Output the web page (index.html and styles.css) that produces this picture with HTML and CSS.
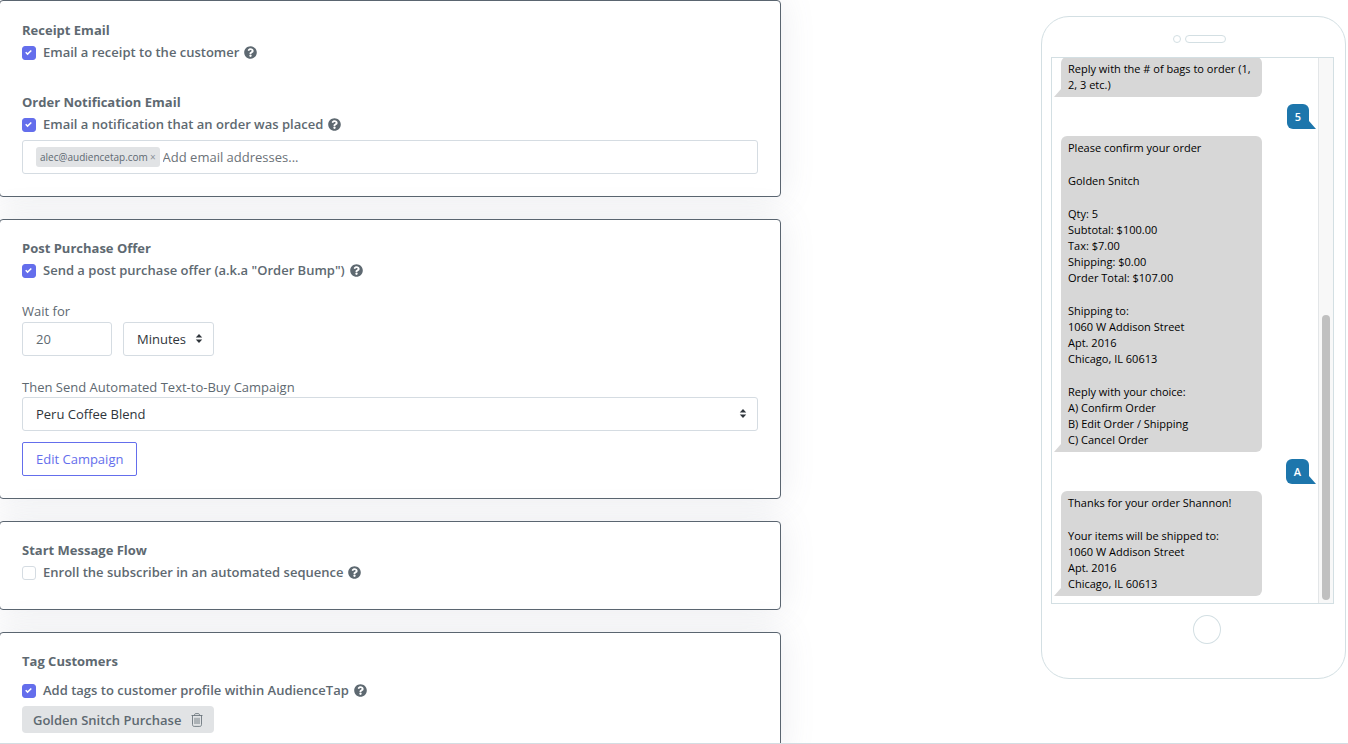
FILE: index.html
```html
<!DOCTYPE html>
<html lang="en">
<head>
<meta charset="utf-8">
<title>Campaign settings</title>
<link rel="stylesheet" href="styles.css">
</head>
<body>
<svg class="sprite" aria-hidden="true">
  <symbol id="help" viewBox="0 0 512 512"><path fill="currentColor" d="M504 256c0 137-111 248-248 248S8 393 8 256 119 8 256 8s248 111 248 248zM262.700 90c-54.500 0-89.300 23-116.500 63.800-3.500 5.300-2.400 12.400 2.700 16.300l34.700 26.300c5.200 3.900 12.600 3 16.700-2.100 17.900-22.700 30.100-35.800 57.300-35.800 20.400 0 45.700 13.100 45.700 33 0 15-12.400 22.700-32.500 34C247.100 238.500 216 254.900 216 296v4c0 6.600 5.400 12 12 12h56c6.600 0 12-5.400 12-12v-1.300c0-28.500 83.200-29.600 83.200-106.700 0-58-60.200-102-116.500-102zM256 338c-25.400 0-46 20.600-46 46s20.600 46 46 46 46-20.600 46-46-20.600-46-46-46z"/></symbol>
  <symbol id="tick" viewBox="0 0 8 8"><path fill="#fff" d="M6.600 1 2.900 4.700 1.400 3.200 0.200 4.400 2.900 7.100 7.800 2.200z"/></symbol>
  <symbol id="carets" viewBox="0 0 8 10"><path fill="currentColor" d="M4 0 7.600 4H.400zM4 10 .400 6h7.200z"/></symbol>
  <symbol id="trash" viewBox="0 0 12 14"><path fill="none" stroke="currentColor" stroke-width=".8" d="M.5 2.500h11M3.500 2.300C3.500 1 4 .6 5 .6h2c1 0 1.500.4 1.500 1.700M1.500 2.500v9c0 1.200.6 1.900 1.700 1.900h5.600c1.100 0 1.700-.7 1.700-1.900v-9M4 4.800v6.200M6 4.800v6.200M8 4.800v6.200"/></symbol>
</svg>
<div class="page">
  <main class="settings">
    <section class="card card-first">
      <h2 class="title">Receipt Email</h2>
      <div class="option">
        <span class="check"><input type="checkbox" id="receipt" checked><svg><use href="#tick"/></svg></span>
        <label for="receipt">Email a receipt to the customer</label>
        <svg class="help"><use href="#help"/></svg>
      </div>
      <h2 class="title title-next">Order Notification Email</h2>
      <div class="option">
        <span class="check"><input type="checkbox" id="notify" checked><svg><use href="#tick"/></svg></span>
        <label for="notify">Email a notification that an order was placed</label>
        <svg class="help"><use href="#help"/></svg>
      </div>
      <div class="emails">
        <span class="email">alec@audiencetap.com<button type="button" aria-label="Remove">×</button></span>
        <input type="text" placeholder="Add email addresses..." aria-label="Add email addresses">
      </div>
    </section>

    <section class="card">
      <h2 class="title">Post Purchase Offer</h2>
      <div class="option">
        <span class="check"><input type="checkbox" id="offer" checked><svg><use href="#tick"/></svg></span>
        <label for="offer">Send a post purchase offer (a.k.a "Order Bump")</label>
        <svg class="help"><use href="#help"/></svg>
      </div>
      <label class="label label-wait" for="wait">Wait for</label>
      <div class="wait">
        <input class="field number" id="wait" type="text" value="20">
        <span class="select"><select class="field" aria-label="Unit"><option>Minutes</option></select><svg><use href="#carets"/></svg></span>
      </div>
      <label class="label label-campaign" for="campaign">Then Send Automated Text-to-Buy Campaign</label>
      <span class="select select-wide"><select class="field" id="campaign"><option>Peru Coffee Blend</option></select><svg><use href="#carets"/></svg></span>
      <button class="edit" type="button">Edit Campaign</button>
    </section>

    <section class="card">
      <h2 class="title">Start Message Flow</h2>
      <div class="option option-last">
        <span class="check"><input type="checkbox" id="flow"><svg><use href="#tick"/></svg></span>
        <label for="flow">Enroll the subscriber in an automated sequence</label>
        <svg class="help"><use href="#help"/></svg>
      </div>
    </section>

    <section class="card">
      <h2 class="title">Tag Customers</h2>
      <div class="option option-tags">
        <span class="check"><input type="checkbox" id="tags" checked><svg><use href="#tick"/></svg></span>
        <label for="tags">Add tags to customer profile within AudienceTap</label>
        <svg class="help"><use href="#help"/></svg>
      </div>
      <span class="tag">Golden Snitch Purchase<button type="button" aria-label="Delete tag"><svg><use href="#trash"/></svg></button></span>
    </section>
  </main>

  <aside class="phone">
    <div class="speaker"><i class="camera"></i><i class="slot"></i></div>
    <div class="screen">
      <div class="chat">
        <div class="msg in"><p>Reply with the # of bags to order (1, 2, 3 etc.)</p></div>
        <div class="msg out"><p>5</p></div>
        <div class="msg in">
          <p>Please confirm your order</p>
          <p>Golden Snitch</p>
          <p>Qty: 5<br>Subtotal: $100.00<br>Tax: $7.00<br>Shipping: $0.00<br>Order Total: $107.00</p>
          <p>Shipping to:<br>1060 W Addison Street<br>Apt. 2016<br>Chicago, IL 60613</p>
          <p>Reply with your choice:<br>A) Confirm Order<br>B) Edit Order / Shipping<br>C) Cancel Order</p>
        </div>
        <div class="msg out"><p>A</p></div>
        <div class="msg in">
          <p>Thanks for your order Shannon!</p>
          <p>Your items will be shipped to:<br>1060 W Addison Street<br>Apt. 2016<br>Chicago, IL 60613</p>
        </div>
      </div>
      <div class="track"><div class="thumb"></div></div>
    </div>
    <div class="home"></div>
  </aside>
</div>
</body>
</html>
```
FILE: styles.css
```css
* { box-sizing: border-box; }
body {
  margin: 0;
  background: #fff;
  color: #5e6971;
  font: 13px/22px "Open Sans", "Noto Sans", sans-serif;
}
input, select, button { font: inherit; color: inherit; margin: 0; }
.sprite { position: absolute; width: 0; height: 0; }
.page {
  display: flex;
  justify-content: space-between;
  align-items: flex-start;
  height: 100vh;
  overflow: hidden;
  border-bottom: 1px solid #d3dde2;
}
.settings {
  width: 58%;
  margin-left: -1px;
  display: flex;
  flex-direction: column;
  gap: 22px;
}
.card {
  padding: 17px 22px 22px;
  background: #fff;
  border: 1px solid #5a6570;
  border-radius: 4px;
  box-shadow: 0 0 35px rgba(110, 120, 145, 0.14);
}
.card-first { padding-top: 18px; }
.title { margin: 0; font-size: 13px; line-height: 22px; font-weight: 700; }
.title-next { margin-top: 28px; }
.option { display: flex; align-items: center; height: 22px; font-weight: 600; }
.option-last { margin-bottom: 4px; }
.option-tags { margin: 7px 0 5px; }
.check { position: relative; width: 14px; height: 14px; margin: 2px 7px 0 0; }
.check input {
  appearance: none;
  display: block;
  width: 14px;
  height: 14px;
  border: 1px solid #d5dce2;
  border-radius: 3px;
  background: #fff;
}
.check input:checked { background: #646eec; border-color: #646eec; }
.check svg { position: absolute; left: 3px; top: 3px; width: 7px; height: 7px; display: none; pointer-events: none; }
.check input:checked + svg { display: block; }
.help { width: 13px; height: 13px; margin-left: 5px; }

.emails {
  display: flex;
  align-items: center;
  gap: 3px;
  height: 34px;
  margin-top: 5px;
  padding: 0 13px;
  border: 1px solid #d5dce2;
  border-radius: 3px;
}
.email {
  display: flex;
  align-items: center;
  height: 20px;
  padding: 0 4px;
  border-radius: 3px;
  background: #e1e3e5;
  font-size: 10px;
}
.email button { padding: 0 0 0 2px; border: 0; background: none; line-height: 18px; color: #8b9298; }
.emails input { flex: 1; min-width: 0; padding: 0; border: 0; outline: 0; background: none; }
.emails input::placeholder { color: #6c7278; opacity: 1; }

.label { display: block; line-height: 22px; }
.label-wait { margin-top: 19px; }
.label-campaign { margin-top: 21px; line-height: 20px; }
.wait { display: flex; gap: 11px; }
.field {
  height: 34px;
  padding: 0 13px;
  border: 1px solid #d5dce2;
  border-radius: 3px;
  background: #fff;
}
.number { width: 90px; }
.select { position: relative; display: block; width: 91px; color: #2f353b; }
.select select { appearance: none; display: block; width: 100%; }
.select svg { position: absolute; right: 11px; top: 12px; width: 8px; height: 9px; pointer-events: none; }
.select-wide { width: 100%; }
.edit {
  display: block;
  height: 34px;
  margin-top: 11px;
  padding: 0 13px;
  border: 1px solid #646eec;
  border-radius: 2px;
  background: #fff;
  color: #646eec;
}
.tag {
  display: flex;
  align-items: center;
  gap: 10px;
  width: fit-content;
  height: 27px;
  padding: 0 11px;
  border-radius: 4px;
  background: #e1e3e5;
  font-weight: 600;
}
.tag button { display: flex; padding: 0; border: 0; background: none; }
.tag svg { width: 12px; height: 14px; }

.phone {
  flex: none;
  width: 305px;
  margin: 16px 2px 0 0;
  padding: 18px 11px 34px 9px;
  border: 1px solid #d3dfe3;
  border-radius: 28px;
}
.speaker { display: flex; align-items: center; justify-content: center; gap: 4px; height: 8px; margin: 0 0 14px 13px; }
.camera { width: 8px; height: 8px; border: 1px solid #d3dfe3; border-radius: 50%; }
.slot { width: 41px; height: 8px; border: 1px solid #d3dfe3; border-radius: 4px; }
.screen { display: flex; height: 547px; border: 1px solid #d3dfe3; overflow: hidden; }
.chat {
  flex: 1;
  display: flex;
  flex-direction: column;
  justify-content: flex-end;
  align-items: flex-start;
  gap: 7px;
  padding: 0 9px 7px;
  color: #000;
  font-size: 11px;
  line-height: 16px;
}
.msg { position: relative; display: flex; flex-direction: column; gap: 17px; border-radius: 6px; }
.msg p { margin: 0; }
.msg::after { content: ""; position: absolute; bottom: 0; width: 7px; height: 8px; }
.in { width: 201px; padding: 4px 7px; background: #d7d7d7; border-bottom-left-radius: 0; }
.in::after { right: 100%; background: #d7d7d7; clip-path: polygon(0 100%, 100% 0, 100% 100%); }
.out { align-self: flex-end; padding: 5px 8px 4px; background: #1d76ac; color: #fff; font-weight: 600; border-bottom-right-radius: 0; }
.out::after { left: 100%; background: #1d76ac; clip-path: polygon(0 0, 100% 100%, 0 100%); }
.track { width: 15px; padding: 257px 3px 3px; border-left: 1px solid #e3e6e8; background: #f8f8f8; display: flex; }
.thumb { flex: 1; border-radius: 4px; background: #c0c0c0; }
.home { width: 28px; height: 29px; margin: 11px 0 0 142px; border: 1px solid #d3dfe3; border-radius: 50%; }
```
